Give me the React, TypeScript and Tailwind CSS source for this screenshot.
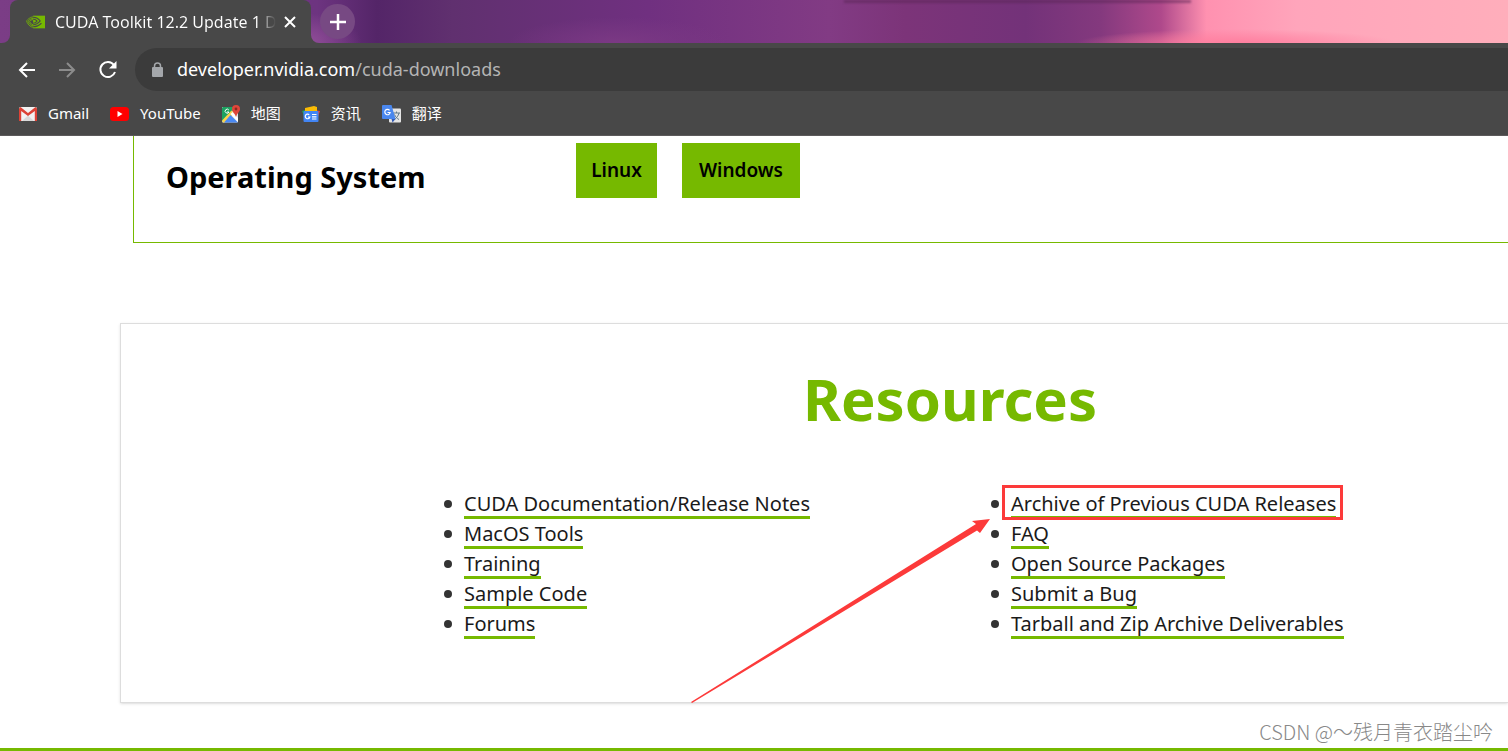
const left = ['CUDA Documentation/Release Notes', 'MacOS Tools', 'Training', 'Sample Code', 'Forums'];
const right = ['Archive of Previous CUDA Releases', 'FAQ', 'Open Source Packages', 'Submit a Bug', 'Tarball and Zip Archive Deliverables'];

function NvidiaIcon() {
  return (
    <svg width="19" height="14" viewBox="0 0 24 16" aria-hidden="true">
      <path d="M9 0h15v16H9z" fill="#76b900" />
      <path d="M9 3.400C4.500 4 2.500 7 2.500 7s1.600 5.200 6.500 5.900M9 4.900C6 5.200 4.600 7.100 4.600 7.100S5.600 11 9 11.600" fill="none" stroke="#76b900" strokeWidth="1.100" />
      <path d="M9 2.200c5.500-.2 9 4.500 9 4.500s-4 4.800-9 4.800M9 4.600c3-.2 5 2.300 5 2.300s-2 2.700-5 2.700M9 14c4.500 0 8-2 10.500-4.400" fill="none" stroke="#484848" strokeWidth="1.400" />
      <path d="M9 1.500C4 2 .6 6.700.6 6.700S3 14 9 14.700" fill="none" stroke="#76b900" strokeWidth="1" />
    </svg>
  );
}

function BackIcon() {
  return (
    <svg width="18" height="16" viewBox="0 0 18 16" fill="none" stroke="currentColor" strokeWidth="2" aria-hidden="true">
      <path d="M17 8H2M9 1 2 8l7 7" />
    </svg>
  );
}

function ReloadIcon() {
  return (
    <svg width="20" height="20" viewBox="0 0 20 20" aria-hidden="true">
      <path d="M15.9 5A7.5 7.5 0 1 0 17 12" fill="none" stroke="#fff" strokeWidth="2" />
      <path d="M18.500 1v7.500H11z" fill="#fff" />
    </svg>
  );
}

function GmailIcon() {
  return (
    <svg width="18" height="14" viewBox="0 0 18 14" aria-hidden="true">
      <rect width="18" height="14" rx="1.500" fill="#f2f2f2" />
      <path d="M3 14 9 8.500 15 14z" fill="#d8d8d8" />
      <path d="M0 1.500V14h2.200V4L9 9l6.800-5v10H18V1.500L16.500 0 9 6 1.500 0z" fill="#dc4236" />
    </svg>
  );
}

function YouTubeIcon() {
  return (
    <svg width="19" height="14" viewBox="0 0 19 14" aria-hidden="true">
      <rect width="19" height="14" rx="3.500" fill="#f00" />
      <path d="M7.500 4v6l5-3z" fill="#fff" />
    </svg>
  );
}

function MapIcon() {
  return (
    <svg width="18" height="18" viewBox="0 0 18 18" aria-hidden="true">
      <rect y="2" width="16" height="15.500" rx="1" fill="#dfe3e6" />
      <path d="M1 2h13L1 16.500 0 16V3z" fill="#1da261" />
      <path d="M0 15.500 9.500 5.500l3 3L3 17.500H1z" fill="#fbd34b" />
      <path d="M8.500 10 16 17.500H2z" fill="#4a89f3" />
      <path d="m8.500 9 2-2 5.500 6v4z" fill="#fff" />
      <path d="M6.800 5A2 2 0 1 0 7 7H5" fill="none" stroke="#fff" />
      <path d="M14 0a4 4 0 0 0-4 4c0 3 3 4 4 8 1-4 4-5 4-8a4 4 0 0 0-4-4z" fill="#e0463a" />
      <circle cx="14" cy="4" r="1.400" fill="#8c2a20" />
    </svg>
  );
}

function NewsIcon() {
  return (
    <svg width="18" height="16" viewBox="0 0 18 16" aria-hidden="true">
      <path d="m0 5 3-1 2 6H2z" fill="#1e9e56" />
      <path d="m13 4 5 1-2 6h-3z" fill="#e94335" />
      <path d="m3 2 9-2 3 1v7H3z" fill="#fbbc04" />
      <rect x="1.500" y="5" width="15" height="11" rx="1" fill="#4285f4" />
      <path d="M7.200 8.800A2.300 2.300 0 1 0 7.800 11H6M10 8.500h4.500M10 10.800h4.500M10 13h4.500" fill="none" stroke="#fff" strokeWidth="1.200" />
    </svg>
  );
}

function TranslateIcon() {
  return (
    <svg width="19" height="18" viewBox="0 0 19 18" aria-hidden="true">
      <rect x="7" y="3.500" width="12" height="14" rx="1" fill="#e4e4e4" />
      <path d="M11 8h7M14.500 6.500V8M17 8c-.7 3-2.500 5-4.500 6.500M12.500 9.500c1 2.500 2.500 4 4.500 5" fill="none" stroke="#607988" />
      <path d="M1 0h8.500l4 14H1a1 1 0 0 1-1-1V1a1 1 0 0 1 1-1z" fill="#4a87ee" />
      <path d="M9.500 14h4l-3 3.500z" fill="#3059b5" />
      <path d="M7.600 5.300A2.700 2.700 0 1 0 8.200 7.500H5.500" fill="none" stroke="#fff" strokeWidth="1.200" />
    </svg>
  );
}

const bookmarks = [
  { label: 'Gmail', Icon: GmailIcon },
  { label: 'YouTube', Icon: YouTubeIcon },
  { label: '地图', Icon: MapIcon },
  { label: '资讯', Icon: NewsIcon },
  { label: '翻译', Icon: TranslateIcon },
];

function ResourceList({ items, marked }: { items: string[]; marked?: boolean }) {
  return (
    <ul className="flex flex-col text-xl leading-[30px] text-[#1a1a1a]">
      {items.map((item, i) => (
        <li key={item} className="flex items-center">
          <span className="mr-3 size-2 shrink-0 rounded-full bg-[#333]" />
          <a href="#resources" className="relative h-[30px] whitespace-nowrap border-b-3 border-[#76b900]">
            {item}
            {marked && i === 0 && <span className="absolute -top-1 -right-[7px] -bottom-1 -left-[9px] border-3 border-[#fc3a3a]" />}
          </a>
        </li>
      ))}
    </ul>
  );
}

export default function App() {
  return (
    <div className="relative min-h-screen overflow-hidden bg-white font-['Noto_Sans','Noto_Sans_CJK_SC',sans-serif]">
      <header className="border-b border-[#5c5a5b] bg-[#484848] text-white">
        <div className="relative flex h-[43px] bg-[radial-gradient(ellipse_110px_26px_at_41%_100%,#7b3984,transparent),radial-gradient(ellipse_60px_30px_at_20%_100%,#94509a,transparent),radial-gradient(ellipse_160px_14px_at_82%_100%,#ff7f9f,transparent),linear-gradient(90deg,#7b3d86_0%,#6d3480_21%,#542568_25%,#60306f_30%,#703080_43%,#823b84_55%,#7c3479_60%,#733279_68%,#84397e_73%,#af498b_77%,#ff91b0_80%,#ffa5bb_86%,#ffaebb_100%)] pl-[10px]">
          <span className="absolute top-0 left-[56%] h-[3px] w-[23%] bg-[#552451]/50 blur-[1px]" />
          <div className="relative flex w-[301px] items-center rounded-t-lg bg-[#484848] pr-[15px] pl-4">
            <svg className="absolute -left-2 bottom-0" width="8" height="8" viewBox="0 0 8 8" aria-hidden="true"><path d="M8 0v8H0a8 8 0 0 0 8-8" fill="#484848" /></svg>
            <svg className="absolute -right-2 bottom-0" width="8" height="8" viewBox="0 0 8 8" aria-hidden="true"><path d="M0 0v8h8a8 8 0 0 1-8-8" fill="#484848" /></svg>
            <NvidiaIcon />
            <span className="ml-[10px] w-[221px] whitespace-nowrap bg-[linear-gradient(90deg,#fff_91%,transparent)] bg-clip-text text-base text-transparent">CUDA Toolkit 12.2 Update 1 Do</span>
            <button aria-label="Close tab" className="ml-auto">
              <svg width="12" height="12" viewBox="0 0 12 12" stroke="#fff" strokeWidth="2" aria-hidden="true"><path d="m1 1 10 10M11 1 1 11" /></svg>
            </button>
          </div>
          <button aria-label="New tab" className="mt-1 ml-[9px] flex size-[35px] items-center justify-center rounded-full bg-[#774983]">
            <svg width="16" height="16" viewBox="0 0 16 16" stroke="#fff" strokeWidth="2.500" aria-hidden="true"><path d="M0 8h16M8 0v16" /></svg>
          </button>
        </div>
        <div className="flex h-[53px] items-center pl-[18px]">
          <button aria-label="Back"><BackIcon /></button>
          <button aria-label="Forward" className="ml-[22px] rotate-180 text-[#8c8c8c]"><BackIcon /></button>
          <button aria-label="Reload" className="ml-[22px]"><ReloadIcon /></button>
          <div className="ml-[17px] flex h-[43px] grow items-center rounded-l-full bg-[#3b3b3b] pl-[17px] text-lg">
            <svg width="11" height="15" viewBox="0 0 11 15" aria-hidden="true">
              <path d="M2.500 6V4a3 3 0 0 1 6 0v2" fill="none" stroke="#a4a7ab" strokeWidth="1.500" />
              <rect y="5" width="11" height="10" rx="1" fill="#a4a7ab" />
            </svg>
            <span className="ml-[14px] pb-0.5">developer.nvidia.com<span className="text-[#b4b4b4]">/cuda-downloads</span></span>
          </div>
        </div>
        <nav className="flex h-[39px] items-center gap-[21px] pb-1 pl-[19px] text-[15px]">
          {bookmarks.map(({ label, Icon }) => (
            <a key={label} href="#bookmark" className="flex items-center gap-[11px] whitespace-nowrap"><Icon />{label}</a>
          ))}
        </nav>
      </header>

      <main>
        <section className="ml-[133px] flex h-[107px] items-start border-b border-l border-[#76b900] pl-8 text-black">
          <h2 className="w-[410px] pt-[19px] text-[29px] leading-[44px] font-bold">Operating System</h2>
          <div className="mt-[7px] flex gap-[25px] text-[19px] font-semibold">
            <button className="h-[55px] w-[81px] bg-[#76b900]">Linux</button>
            <button className="h-[55px] w-[118px] bg-[#76b900]">Windows</button>
          </div>
        </section>

        <section id="resources" className="relative mt-20 ml-[120px] h-[380px] border border-r-0 border-[#ddd] shadow-sm">
          <h1 className="mt-[35px] pl-[271px] text-center text-[58px] leading-[80px] font-bold text-[#76b900]">Resources</h1>
          <div className="mt-[50px] flex pl-[323px]">
            <div className="w-[547px]"><ResourceList items={left} /></div>
            <ResourceList items={right} marked />
          </div>
          <svg className="absolute top-[194px] left-[570px]" width="300" height="186" viewBox="0 0 300 186" aria-hidden="true">
            <path d="M0 184 285 6l-4-3 18-2-10 14-3-2.500L1 185z" fill="#fc3a3a" />
          </svg>
        </section>
      </main>
      <p className="absolute right-[15px] bottom-1 font-['Noto_Sans_CJK_SC',sans-serif] text-xl leading-[30px] font-light text-[#888]">CSDN @～残月青衣踏尘吟</p>
      <footer className="absolute inset-x-0 bottom-0 h-[3px] bg-[#76b900]" />
    </div>
  );
}
